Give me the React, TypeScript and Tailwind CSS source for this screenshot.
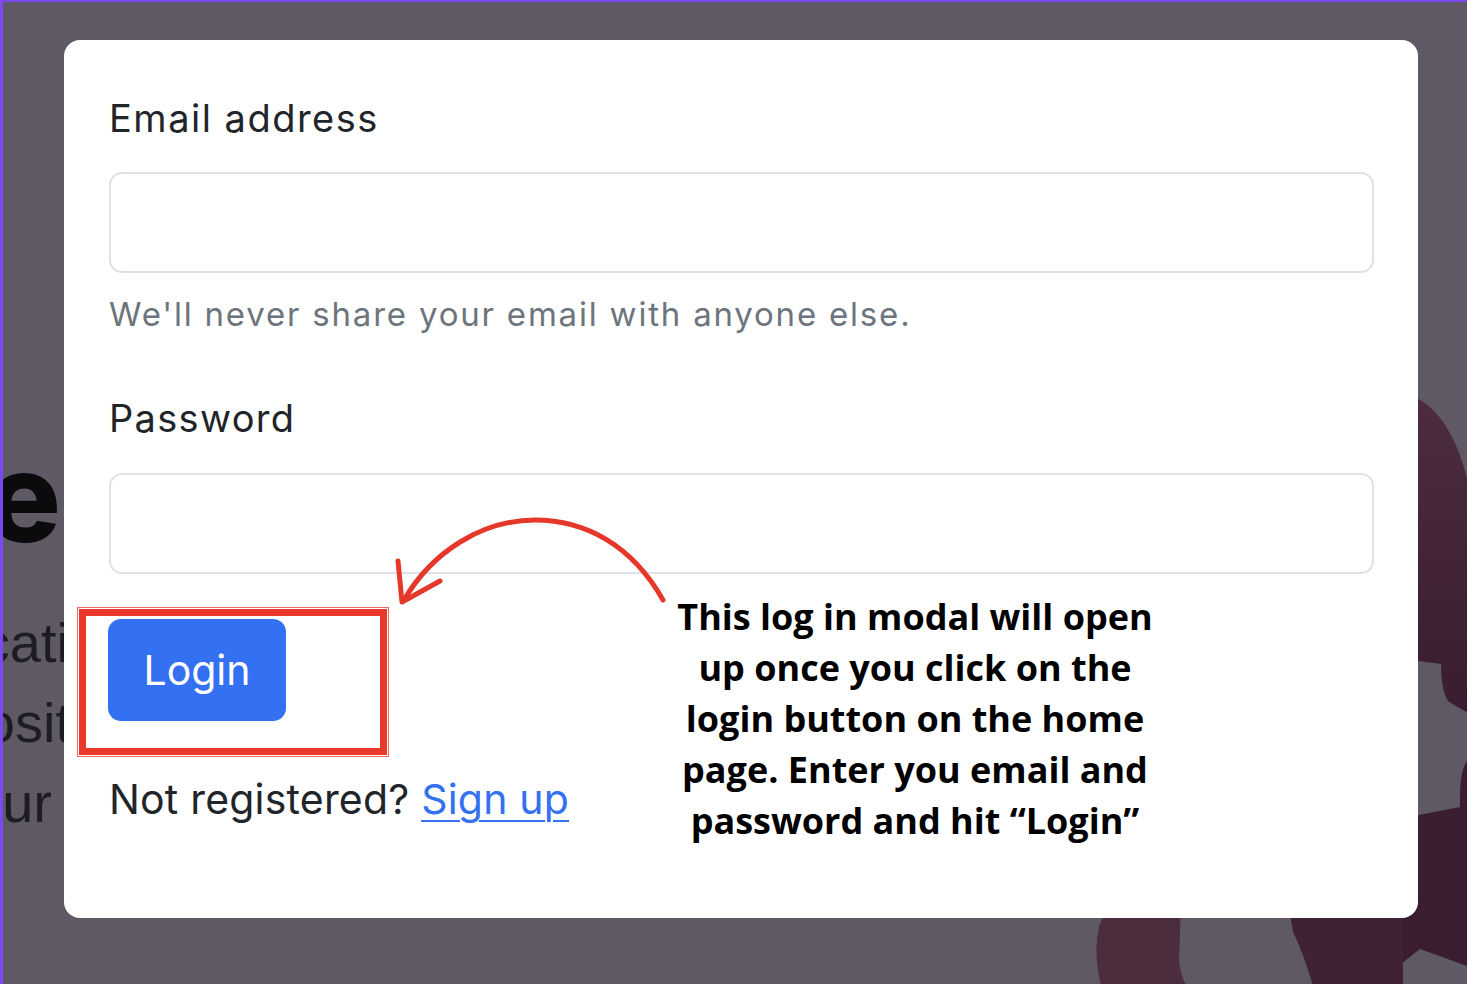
import React from 'react';

const BackgroundShapes: React.FC = () => (
  <svg className="absolute left-0 top-0" width="1474" height="984" viewBox="0 0 1474 984">
    <defs>
      <linearGradient id="blob" x1="0" y1="0" x2="0" y2="1">
        <stop offset="0" stopColor="#4d2c3f" />
        <stop offset="1" stopColor="#3a1d30" />
      </linearGradient>
    </defs>
    <path d="M1400 390 Q1450 405 1467 490 L1467 712 L1446 700 Q1438 690 1438 662 L1400 657 Z" fill="url(#blob)" />
    <path d="M1467 757 Q1456 762 1457 805 L1380 820 L1380 984 L1370 984 L1417 947 L1467 965 Z" fill="#3a1d30" />
    <path d="M1120 900 L1178 900 L1176 960 Q1180 984 1186 984 L1098 984 Q1090 950 1096 925 Q1102 905 1120 900 Z" fill="#4b2d3e" />
    <path d="M1285 900 L1400 900 L1400 984 L1370 984 L1310 984 Q1300 950 1290 930 Z" fill="#3f2335" />
  </svg>
);

const PageBehind: React.FC = () => (
  <div className="absolute inset-0 overflow-hidden">
    <BackgroundShapes />
    <div className="absolute left-[-300px] top-[420px] w-[358px] text-right font-['Inter',sans-serif] text-[125px] font-extrabold leading-[150px] text-[#0b0b0d]">
      e
    </div>
    <div className="absolute left-[-300px] top-[611px] w-[366px] text-right font-['Liberation_Sans',sans-serif] text-[56px] leading-[60px] text-[#1d1c22]">
      cati
    </div>
    <div className="absolute left-[-300px] top-[691px] w-[368px] text-right font-['Liberation_Sans',sans-serif] text-[56px] leading-[60px] text-[#1d1c22]">
      osit
    </div>
    <div className="absolute left-[-300px] top-[771px] w-[349px] text-right font-['Liberation_Sans',sans-serif] text-[56px] leading-[60px] text-[#1d1c22]">
      ur
    </div>
  </div>
);

const Annotation: React.FC = () => (
  <>
    <svg className="absolute left-0 top-0 pointer-events-none" width="1474" height="984" viewBox="0 0 1474 984">
      <path d="M663 600 C632 545 585 520 535 520 C482 520 432 552 404 600" fill="none" stroke="#e5372a" strokeWidth="5" strokeLinecap="round" />
      <path d="M398 561 L402 602 L440 581" fill="none" stroke="#e5372a" strokeWidth="5" strokeLinecap="round" strokeLinejoin="round" />
    </svg>
    <div className="absolute left-[77px] top-[607px] w-[312px] h-[150px] border border-[#ef6a5e] p-[1px]">
      <div className="w-full h-full border-[7px] border-[#e8392a]" />
    </div>
    <div className="absolute left-[615px] top-[591px] w-[600px] text-center font-['Open_Sans',sans-serif] font-bold text-[36px] leading-[51px] text-black">
      <div>This log in modal will open</div>
      <div>up once you click on the</div>
      <div>login button on the home</div>
      <div>page. Enter you email and</div>
      <div>password and hit “Login”</div>
    </div>
  </>
);

export default function App() {
  return (
    <div className="relative w-[1474px] h-[984px] overflow-hidden bg-white">
      <div className="relative w-[1467px] h-[984px] bg-[#5f5966] border-t-2 border-l-[3px] border-[#7b48f2] overflow-hidden">
        <PageBehind />
        <div className="absolute inset-0 pl-[61px] pt-[38px]">
          <div className="relative w-[1354px] h-[878px] bg-white rounded-[16px] pl-[45px] pr-[44px] pt-[56px] flex flex-col font-['Inter',sans-serif] text-[#212529]">
            <label className="text-[38px] leading-[44px] tracking-[1.5px]">Email address</label>
            <div className="mt-[32px] h-[101px] rounded-[13px] border-2 border-[#dee2e6] bg-white" />
            <p className="mt-[21px] text-[33px] leading-[40px] tracking-[1.8px] text-[#6c757d]">
              We'll never share your email with anyone else.
            </p>
            <label className="mt-[62px] text-[38px] leading-[44px] tracking-[1.3px]">Password</label>
            <div className="mt-[33px] h-[101px] rounded-[13px] border-2 border-[#dee2e6] bg-white" />
            <div className="mt-[45px] flex">
              <button className="w-[178px] h-[102px] -ml-[1px] rounded-[13px] bg-[#3470f2] text-white text-[41px] leading-none">
                Login
              </button>
            </div>
            <p className="mt-[53px] text-[41px] leading-[50px] tracking-[0.2px]">
              Not registered?{' '}
              <a className="text-[#3470f2] underline underline-offset-[6px] decoration-[2px]">Sign up</a>
            </p>
          </div>
        </div>
      </div>
      <Annotation />
    </div>
  );
}
